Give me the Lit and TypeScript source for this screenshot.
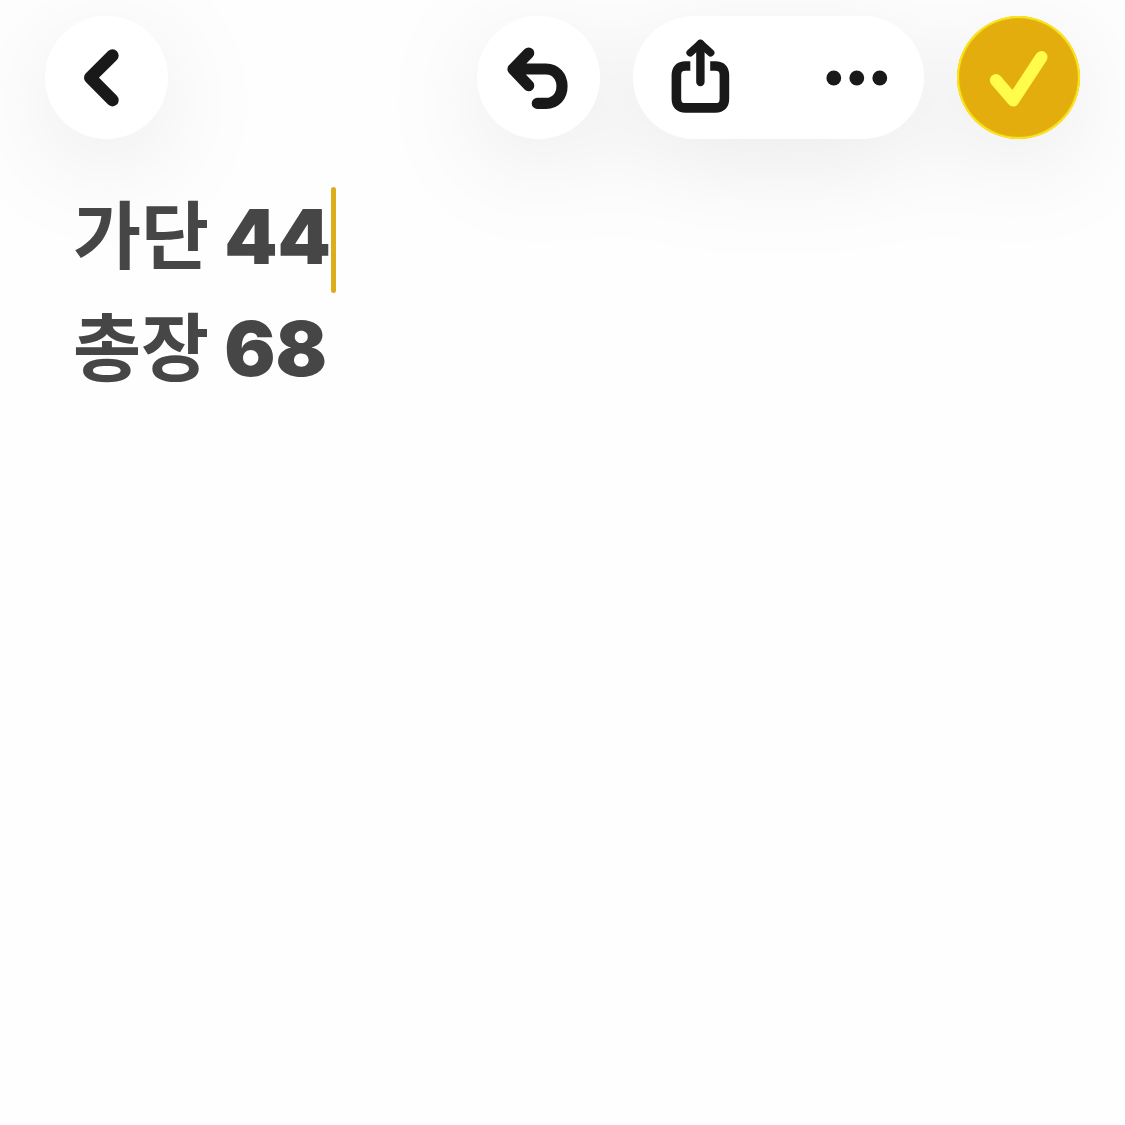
import { LitElement, html, css } from "lit";
import { customElement } from "lit/decorators.js";

@customElement("note-toolbar")
class NoteToolbar extends LitElement {
  static styles = css`
    :host {
      display: block;
    }
    .bar {
      display: flex;
      align-items: center;
      gap: 33px;
      padding: 16px 45px 0;
      filter: drop-shadow(0 24px 50px rgba(0, 0, 0, 0.08));
    }
    .spacer {
      flex: 1;
    }
    .pill {
      display: flex;
      gap: 23px;
      border-radius: 62px;
      background: #fff;
    }
    .done {
      background: #e3ae0d;
      box-shadow: inset 0 0 1px 2px #fbe81c;
    }
    button {
      display: block;
      margin: 0;
      padding: 0;
      border: 0;
      border-radius: 62px;
      background: none;
      color: #191919;
      cursor: pointer;
    }
    .done button {
      color: #fffc4c;
    }
    svg {
      display: block;
      fill: none;
      stroke: currentColor;
      stroke-linecap: round;
      stroke-linejoin: round;
    }
    .dots {
      fill: currentColor;
      stroke: none;
    }
  `;

  render() {
    return html`
      <nav class="bar" aria-label="Note">
        <div class="pill">
          <button type="button" aria-label="Back">
            <svg width="123" height="123" viewBox="0 0 123 123" stroke-width="12.4">
              <path d="M67.5 39.5 45.2 61.7 67.5 84.2" />
            </svg>
          </button>
        </div>
        <div class="spacer"></div>
        <div class="pill">
          <button type="button" aria-label="Undo">
            <svg width="123" height="123" viewBox="0 0 123 123" stroke-width="11.2">
              <path d="M51.7 37 36 53.2 51.7 69.7M36 53H69C78.7 53 85 60.4 85 70.2S78.7 87.4 69 87.4H60.3" />
              <path d="M37 53 46 46V60Z" fill="currentColor" stroke-width="2" />
            </svg>
          </button>
        </div>
        <div class="pill">
          <button type="button" aria-label="Share">
            <svg width="134" height="123" viewBox="0 0 134 123">
              <path
                stroke-width="9.6"
                stroke-linecap="butt"
                d="M57.3 50H52.5Q43.4 50 43.4 59.1V82.8Q43.4 91.9 52.5 91.9H82.3Q91.4 91.9 91.4 82.8V59.1Q91.4 50 82.3 50H77.2"
              />
              <path stroke-width="8.4" d="M67.4 28V66" />
              <path stroke-width="7.6" d="M57.2 36.7 67.4 27.5 77.6 36.7" />
            </svg>
          </button>
          <button type="button" aria-label="More">
            <svg class="dots" width="134" height="123" viewBox="0 0 134 123">
              <circle cx="43.8" cy="62" r="7.4" />
              <circle cx="66.8" cy="62" r="7.4" />
              <circle cx="89.8" cy="62" r="7.4" />
            </svg>
          </button>
        </div>
        <div class="pill done">
          <button type="button" aria-label="Done">
            <svg width="123" height="123" viewBox="0 0 123 123" stroke-width="12.4">
              <path d="M39 64.3 56.2 84.2 84.4 41.2" />
            </svg>
          </button>
        </div>
      </nav>
    `;
  }
}

@customElement("note-editor")
class NoteEditor extends LitElement {
  static styles = css`
    :host {
      display: block;
      position: relative;
    }
    .note {
      padding: 45px 73px;
      outline: none;
      caret-color: #dcae1c;
      color: #464646;
      font-family: Inter, "Noto Sans CJK KR", sans-serif;
      font-size: 76px;
      font-weight: 900;
      font-optical-sizing: none;
      line-height: 104px;
    }
    .line {
      display: flex;
      align-items: flex-start;
      gap: 15px;
      height: 112px;
      margin: 0;
    }
    .word {
      font-family: "Noto Sans CJK KR", sans-serif;
      font-size: 74px;
      font-weight: 700;
      line-height: 94px;
    }
    .entry {
      display: flex;
      align-items: flex-start;
    }
    .caret {
      width: 5px;
      height: 106px;
      margin-top: 3px;
      border-radius: 3px;
      background: #dcae1c;
    }
  `;

  render() {
    return html`
      <div class="note" role="textbox" aria-multiline="true" aria-label="Note text" contenteditable="true">
        <p class="line"><span class="word">가단</span> <span class="entry">44<span class="caret"></span></span></p>
        <p class="line"><span class="word">총장</span> <span class="entry">68</span></p>
      </div>
    `;
  }
}

@customElement("app-root")
class AppRoot extends LitElement {
  static styles = css`
    :host {
      display: block;
      min-height: 100vh;
      overflow: hidden;
      background: #fefefe;
    }
  `;

  render() {
    return html`
      <note-toolbar></note-toolbar>
      <note-editor></note-editor>
    `;
  }
}
